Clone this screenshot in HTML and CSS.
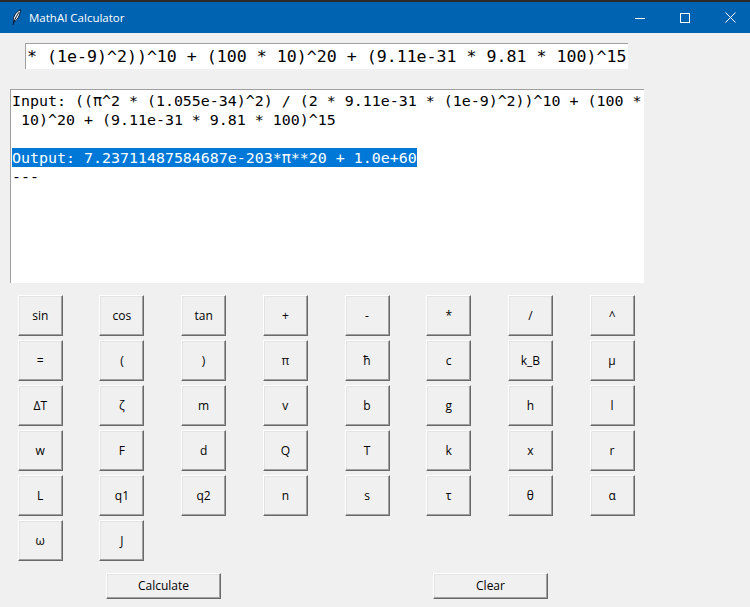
FILE: index.html
```html
<!DOCTYPE html>
<html lang="en">
<head>
<meta charset="utf-8">
<title>MathAI Calculator</title>
<link rel="stylesheet" href="styles.css">
</head>
<body>
<div class="window">
  <header class="titlebar">
    <svg class="app-icon" width="10" height="17" viewBox="0 0 10 17" aria-hidden="true">
      <path d="M8.6 .8C5.4 1.8 2.6 5 1.6 8.6 1.1 10.4 1.2 11.6 1.8 12.8 4 12 5.8 9.8 7 7 8 4.8 8.6 2.6 8.6 .8Z" fill="#e8eef5" stroke="#06162c" stroke-width="1"/>
      <path d="M7.4 3C5.2 5.6 3.2 9.4 2 13L1 16" fill="none" stroke="#06162c" stroke-width="1"/>
    </svg>
    <span class="title">MathAI Calculator</span>
    <div class="controls">
      <svg width="10" height="10" viewBox="0 0 10 10" aria-hidden="true"><path d="M0 5.5H10" stroke="#fff" stroke-width="1"/></svg>
      <svg width="10" height="10" viewBox="0 0 10 10" aria-hidden="true"><rect x=".5" y=".5" width="9" height="9" fill="none" stroke="#fff" stroke-width="1"/></svg>
      <svg width="11" height="11" viewBox="0 0 11 11" aria-hidden="true"><path d="M.5.5L10.5 10.5M10.5.5L.5 10.5" stroke="#fff" stroke-width="1"/></svg>
    </div>
  </header>
  <main class="content">
    <div class="entry">* (1e-9)^2))^10 + (100 * 10)^20 + (9.11e-31 * 9.81 * 100)^15</div>
    <pre class="log">Input: ((π^2 * (1.055e-34)^2) / (2 * 9.11e-31 * (1e-9)^2))^10 + (100 *
 10)^20 + (9.11e-31 * 9.81 * 100)^15

<span class="selected">Output: 7.23711487584687e-203*π**20 + 1.0e+60</span>
---</pre>
    <div class="keys">
      <button class="key">sin</button><button class="key">cos</button><button class="key">tan</button><button class="key">+</button><button class="key">-</button><button class="key">*</button><button class="key">/</button><button class="key">^</button>
      <button class="key">=</button><button class="key">(</button><button class="key">)</button><button class="key">π</button><button class="key">ħ</button><button class="key">c</button><button class="key">k_B</button><button class="key">μ</button>
      <button class="key">ΔT</button><button class="key">ζ</button><button class="key">m</button><button class="key">v</button><button class="key">b</button><button class="key">g</button><button class="key">h</button><button class="key">l</button>
      <button class="key">w</button><button class="key">F</button><button class="key">d</button><button class="key">Q</button><button class="key">T</button><button class="key">k</button><button class="key">x</button><button class="key">r</button>
      <button class="key">L</button><button class="key">q1</button><button class="key">q2</button><button class="key">n</button><button class="key">s</button><button class="key">τ</button><button class="key">θ</button><button class="key">α</button>
      <button class="key">ω</button><button class="key">J</button>
    </div>
    <div class="actions">
      <button class="key action">Calculate</button>
      <button class="key action">Clear</button>
    </div>
  </main>
</div>
</body>
</html>
```

FILE: styles.css
```css
* { box-sizing: border-box; }
html, body { margin: 0; padding: 0; }
body { width: 750px; height: 607px; overflow: hidden; background: #f0f0f0; }
.window { display: flex; flex-direction: column; height: 607px; border-top: 2px solid #2b2b2b; }
.titlebar {
  display: flex; align-items: center; height: 31px; flex: none;
  padding-left: 12px; background: #0063b1; color: #fff;
  font: 11.5px "Open Sans", "Noto Sans", sans-serif;
}
.app-icon { flex: none; margin-right: 7px; }
.title { flex: 1; }
.controls { display: flex; align-items: center; gap: 35px; padding-right: 14px; }
.content { flex: 1; display: flex; flex-direction: column; align-items: flex-start; padding: 10px 0 0 10px; }
.entry {
  width: 603px; height: 26px; margin-left: 15px; padding: 0 0 0 1px; overflow: hidden;
  background: #fff; border-top: 1px solid #a0a0a0; border-left: 1px solid #a0a0a0;
  font: 16.6px/26px "DejaVu Sans Mono", monospace; color: #000; white-space: pre;
}
.log {
  width: 634px; height: 194px; margin: 20px 0 0; padding: 2px 0 0 1px; overflow: hidden;
  background: #fff; border-top: 1px solid #a0a0a0; border-left: 1px solid #a0a0a0;
  font: 14.95px/19px "DejaVu Sans Mono", monospace; color: #000;
}
.selected {
  display: inline-block; color: #fff;
  background: linear-gradient(#0078d7 18px, transparent 18px);
  box-shadow: 0 -1px 0 #0078d7;
}
.keys {
  display: grid; grid-template-columns: repeat(8, 45px); grid-auto-rows: 41px;
  column-gap: 36.7px; row-gap: 4px; margin: 12px 0 0 7.75px;
}
.key {
  padding: 0; margin: 0; background: #f0f0f0; color: #000; border-radius: 0;
  border: 1px solid; border-color: #fff #696969 #696969 #fff;
  box-shadow: inset -1px -1px 0 #a0a0a0, inset 1px 1px 0 #e3e3e3;
  font: 12px "Open Sans", "Noto Sans", sans-serif;
}
.actions { display: flex; gap: 212px; margin: 12px 0 0 96px; }
.action { width: 115px; height: 26px; padding-bottom: 2px; }
```
